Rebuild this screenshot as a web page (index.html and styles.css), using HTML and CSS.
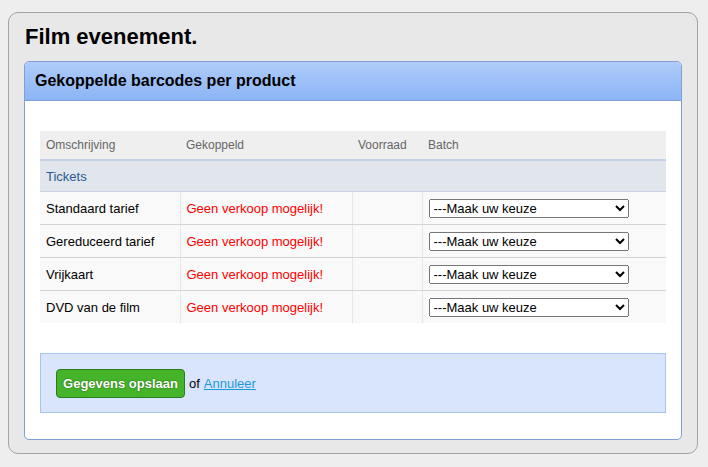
FILE: index.html
```html
<!DOCTYPE html>
<html>
<head>
<meta charset="utf-8">
<link rel="stylesheet" href="styles.css">
</head>
<body>
<div class="outer">
  <h1 class="title">Film evenement.</h1>
  <div class="panel">
    <div class="panel-head">Gekoppelde barcodes per product</div>
    <div class="panel-body">
      <table class="grid">
        <thead>
          <tr>
            <th class="c1">Omschrijving</th>
            <th class="c2">Gekoppeld</th>
            <th class="c3">Voorraad</th>
            <th class="c4">Batch</th>
          </tr>
        </thead>
        <tbody>
          <tr class="group"><td colspan="4">Tickets</td></tr>
          <tr class="row">
            <td>Standaard tarief</td>
            <td class="err">Geen verkoop mogelijk!</td>
            <td></td>
            <td><select class="sel"><option>---Maak uw keuze</option></select></td>
          </tr>
          <tr class="row">
            <td>Gereduceerd tarief</td>
            <td class="err">Geen verkoop mogelijk!</td>
            <td></td>
            <td><select class="sel"><option>---Maak uw keuze</option></select></td>
          </tr>
          <tr class="row">
            <td>Vrijkaart</td>
            <td class="err">Geen verkoop mogelijk!</td>
            <td></td>
            <td><select class="sel"><option>---Maak uw keuze</option></select></td>
          </tr>
          <tr class="row last">
            <td>DVD van de film</td>
            <td class="err">Geen verkoop mogelijk!</td>
            <td></td>
            <td><select class="sel"><option>---Maak uw keuze</option></select></td>
          </tr>
        </tbody>
      </table>
      <div class="actions">
        <button class="save">Gegevens opslaan</button>
        <span class="of">of</span>
        <a class="cancel" href="#">Annuleer</a>
      </div>
    </div>
  </div>
</div>
</body>
</html>
```
FILE: styles.css
```css
html, body {
  margin: 0;
  padding: 0;
  background: #eeeeee;
  font-family: "Liberation Sans", Arial, sans-serif;
  font-size: 13px;
  color: #000;
}
body {
  padding: 12px 10px 0 8px;
}
.outer {
  background: #e8e8e8;
  border: 1px solid #a3a3a3;
  border-radius: 10px;
  padding: 0 15px 15px 15px;
  height: 442px;
  box-sizing: border-box;
}
.title {
  margin: 0;
  padding: 11px 0 0 1px;
  height: 48px;
  box-sizing: border-box;
  font-size: 22px;
  font-weight: bold;
  line-height: 26px;
}
.panel {
  background: #fff;
  border: 1px solid #7f9fd6;
  border-radius: 5px;
  overflow: hidden;
  height: 379px;
  box-sizing: border-box;
}
.panel-head {
  height: 39px;
  box-sizing: border-box;
  border-bottom: 1px solid #7f9fd6;
  background: linear-gradient(#afccfa, #8cb4f5);
  font-size: 16px;
  font-weight: bold;
  line-height: 38px;
  padding-left: 10px;
}
.panel-body {
  padding: 30px 15px 0 15px;
}
.grid {
  width: 626px;
  border-collapse: collapse;
  table-layout: fixed;
}
.grid th {
  background: #efefef;
  color: #666;
  font-weight: normal;
  font-size: 12px;
  text-align: left;
  height: 28px;
  padding: 0 6px;
  border-bottom: 2px solid #c5d2e6;
}
.c1 { width: 128px; }
.c2 { width: 160px; }
.c3 { width: 58px; }
.c4 { width: 232px; }
.group td {
  background: #e1e5ec;
  color: #2b5a91;
  height: 30px;
  padding: 0 6px;
  border-bottom: 1px solid #c8d2e2;
}
.row td {
  background: #f9f9f9;
  height: 32px;
  padding: 0 6px;
  border-bottom: 1px solid #d4d4d4;
  border-right: 1px solid #e6e6e6;
}
.row td:last-child {
  border-right: none;
}
.row.last td {
  border-bottom: none;
}
.err {
  color: #f00;
}
.sel {
  width: 200px;
  height: 19px;
  font-family: "Liberation Sans", Arial, sans-serif;
  font-size: 13px;
  padding: 0;
  vertical-align: middle;
}
.actions {
  margin-top: 30px;
  height: 60px;
  box-sizing: border-box;
  background: #d9e5fc;
  border: 1px solid #a9c4ef;
  display: flex;
  align-items: center;
  padding-left: 15px;
  gap: 4px;
}
.save {
  width: 129px;
  height: 29px;
  background: #46b42b;
  border: 1px solid #2c7c1c;
  border-radius: 4px;
  color: #fff;
  font-family: "Liberation Sans", Arial, sans-serif;
  font-size: 13px;
  font-weight: bold;
  text-shadow: 0 0 2px #1f5c12;
  padding: 0;
  margin-top: 1px;
}
.of {
  color: #000;
}
.cancel {
  color: #1a98dc;
  text-decoration: underline;
}
```
